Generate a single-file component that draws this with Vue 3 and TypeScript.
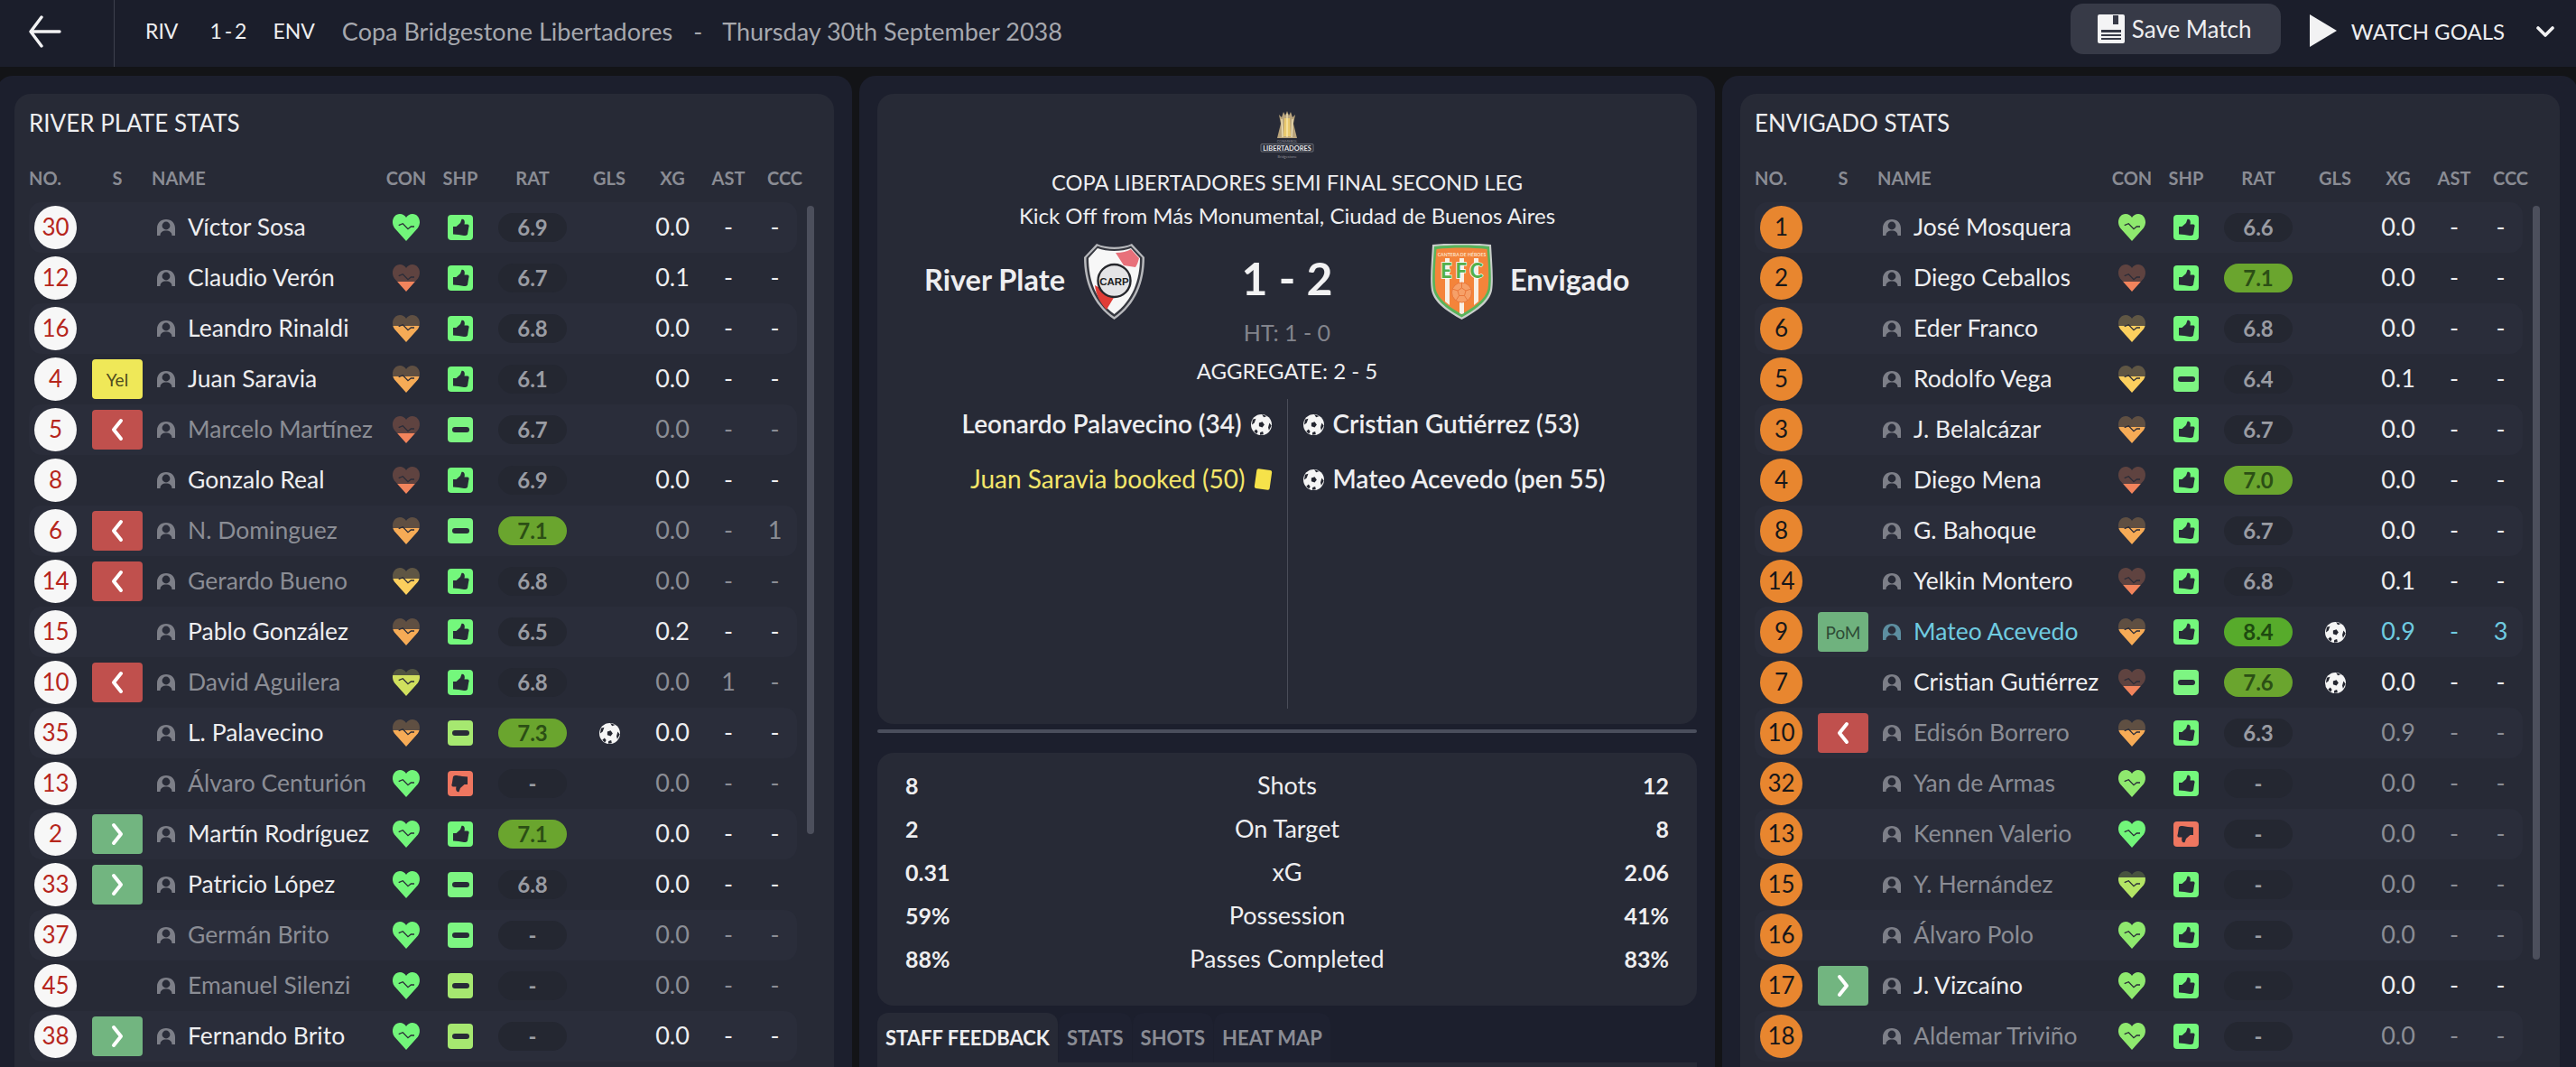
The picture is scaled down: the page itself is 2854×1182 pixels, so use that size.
<script setup lang="ts">
type Con = 'green' | 'lgreen' | 'lime' | 'yellow' | 'orange' | 'red' | 'olive'
type Shp = 'up' | 'down' | 'mid' | 'lmid'
type Sub = '' | 'on' | 'off' | 'yel' | 'pom'
interface Player {
  no: number; s: Sub; name: string; con: Con; shp: Shp; rat: string; gls?: boolean
  xg: string; ast?: string; ccc?: string; dim?: boolean; star?: boolean
}

const heartFill: Record<Con, { top: string; bottom: string; split: number }> = {
  green: { top: '#72f57a', bottom: '#72f57a', split: 0 },
  lgreen: { top: '#8fe96e', bottom: '#8fe96e', split: 0 },
  lime: { top: '#47533f', bottom: '#b4e565', split: 22 },
  olive: { top: '#4f5340', bottom: '#d0e05e', split: 22 },
  yellow: { top: '#5f5644', bottom: '#fbcf5e', split: 39 },
  orange: { top: '#5f4f42', bottom: '#f6ab56', split: 40 },
  red: { top: '#5f4340', bottom: '#f2845c', split: 62 },
}

function heartStyle(c: Con) {
  const h = heartFill[c]
  return { background: `linear-gradient(${h.top} ${h.split}%, ${h.bottom} ${h.split}%)` }
}

function ratClass(r: string) {
  const v = parseFloat(r)
  if (v >= 8) return 'great'
  if (v >= 7) return 'good'
  return ''
}

const ballPath = 'M12 8.4 L15.3 10.8 L14 14.7 H10 L8.7 10.8 Z M9 0.5 L15 0.5 L12 3 Z M0.6 9.5 L3.8 7.2 L3.6 12.5 L1.6 15.5 Z M23.4 9.5 L20.2 7.2 L20.4 12.5 L22.4 15.5 Z M6.2 21.8 L8 18.8 L10.6 20.8 L10 23.7 Z M17.8 21.8 L16 18.8 L13.4 20.8 L14 23.7 Z'

const river: Player[] = [
  { no: 30, s: '', name: 'Víctor Sosa', con: 'green', shp: 'up', rat: '6.9', xg: '0.0' },
  { no: 12, s: '', name: 'Claudio Verón', con: 'red', shp: 'up', rat: '6.7', xg: '0.1' },
  { no: 16, s: '', name: 'Leandro Rinaldi', con: 'orange', shp: 'up', rat: '6.8', xg: '0.0' },
  { no: 4, s: 'yel', name: 'Juan Saravia', con: 'orange', shp: 'up', rat: '6.1', xg: '0.0' },
  { no: 5, s: 'off', name: 'Marcelo Martínez', con: 'red', shp: 'mid', rat: '6.7', xg: '0.0', dim: true },
  { no: 8, s: '', name: 'Gonzalo Real', con: 'red', shp: 'up', rat: '6.9', xg: '0.0' },
  { no: 6, s: 'off', name: 'N. Dominguez', con: 'orange', shp: 'mid', rat: '7.1', xg: '0.0', ccc: '1', dim: true },
  { no: 14, s: 'off', name: 'Gerardo Bueno', con: 'yellow', shp: 'up', rat: '6.8', xg: '0.0', dim: true },
  { no: 15, s: '', name: 'Pablo González', con: 'orange', shp: 'up', rat: '6.5', xg: '0.2' },
  { no: 10, s: 'off', name: 'David Aguilera', con: 'olive', shp: 'up', rat: '6.8', xg: '0.0', ast: '1', dim: true },
  { no: 35, s: '', name: 'L. Palavecino', con: 'orange', shp: 'lmid', rat: '7.3', gls: true, xg: '0.0' },
  { no: 13, s: '', name: 'Álvaro Centurión', con: 'green', shp: 'down', rat: '-', xg: '0.0', dim: true },
  { no: 2, s: 'on', name: 'Martín Rodríguez', con: 'green', shp: 'up', rat: '7.1', xg: '0.0' },
  { no: 33, s: 'on', name: 'Patricio López', con: 'green', shp: 'mid', rat: '6.8', xg: '0.0' },
  { no: 37, s: '', name: 'Germán Brito', con: 'green', shp: 'mid', rat: '-', xg: '0.0', dim: true },
  { no: 45, s: '', name: 'Emanuel Silenzi', con: 'green', shp: 'lmid', rat: '-', xg: '0.0', dim: true },
  { no: 38, s: 'on', name: 'Fernando Brito', con: 'green', shp: 'lmid', rat: '-', xg: '0.0' },
]

const envigado: Player[] = [
  { no: 1, s: '', name: 'José Mosquera', con: 'lgreen', shp: 'up', rat: '6.6', xg: '0.0' },
  { no: 2, s: '', name: 'Diego Ceballos', con: 'red', shp: 'up', rat: '7.1', xg: '0.0' },
  { no: 6, s: '', name: 'Eder Franco', con: 'yellow', shp: 'up', rat: '6.8', xg: '0.0' },
  { no: 5, s: '', name: 'Rodolfo Vega', con: 'yellow', shp: 'mid', rat: '6.4', xg: '0.1' },
  { no: 3, s: '', name: 'J. Belalcázar', con: 'orange', shp: 'up', rat: '6.7', xg: '0.0' },
  { no: 4, s: '', name: 'Diego Mena', con: 'red', shp: 'up', rat: '7.0', xg: '0.0' },
  { no: 8, s: '', name: 'G. Bahoque', con: 'orange', shp: 'up', rat: '6.7', xg: '0.0' },
  { no: 14, s: '', name: 'Yelkin Montero', con: 'red', shp: 'up', rat: '6.8', xg: '0.1' },
  { no: 9, s: 'pom', name: 'Mateo Acevedo', con: 'orange', shp: 'up', rat: '8.4', gls: true, xg: '0.9', ccc: '3', star: true },
  { no: 7, s: '', name: 'Cristian Gutiérrez', con: 'red', shp: 'mid', rat: '7.6', gls: true, xg: '0.0' },
  { no: 10, s: 'off', name: 'Edisón Borrero', con: 'orange', shp: 'up', rat: '6.3', xg: '0.9', dim: true },
  { no: 32, s: '', name: 'Yan de Armas', con: 'lgreen', shp: 'up', rat: '-', xg: '0.0', dim: true },
  { no: 13, s: '', name: 'Kennen Valerio', con: 'green', shp: 'down', rat: '-', xg: '0.0', dim: true },
  { no: 15, s: '', name: 'Y. Hernández', con: 'lime', shp: 'up', rat: '-', xg: '0.0', dim: true },
  { no: 16, s: '', name: 'Álvaro Polo', con: 'lgreen', shp: 'up', rat: '-', xg: '0.0', dim: true },
  { no: 17, s: 'on', name: 'J. Vizcaíno', con: 'lgreen', shp: 'up', rat: '-', xg: '0.0' },
  { no: 18, s: '', name: 'Aldemar Triviño', con: 'lgreen', shp: 'up', rat: '-', xg: '0.0', dim: true },
]

const teams = [
  { key: 'riv', title: 'RIVER PLATE STATS', players: river, thumb: 696, numClass: 'num-white' },
  { key: 'env', title: 'ENVIGADO STATS', players: envigado, thumb: 835, numClass: 'num-orange' },
]

const headers = [
  { t: 'NO.', c: 'h-no' }, { t: 'S', c: '' }, { t: 'NAME', c: 'h-name' }, { t: 'CON', c: '' }, { t: 'SHP', c: '' },
  { t: 'RAT', c: '' }, { t: 'GLS', c: '' }, { t: 'XG', c: '' }, { t: 'AST', c: '' }, { t: 'CCC', c: 'h-ccc' },
]

const matchStats = [
  ['8', 'Shots', '12'], ['2', 'On Target', '8'], ['0.31', 'xG', '2.06'],
  ['59%', 'Possession', '41%'], ['88%', 'Passes Completed', '83%'],
]
const tabs = ['STAFF FEEDBACK', 'STATS', 'SHOTS', 'HEAT MAP']
</script>

<template>
  <div class="page">
    <header class="topbar">
      <div class="back">
        <svg width="36" height="36" viewBox="0 0 36 36" fill="none" stroke="#f2f2f3" stroke-width="3.4" stroke-linecap="round" stroke-linejoin="round">
          <path d="M14 2 L2 18 L14 34 M3 18 H34" />
        </svg>
      </div>
      <span class="abbr first">RIV</span>
      <span class="abbr score-mini">1 - 2</span>
      <span class="abbr env">ENV</span>
      <span class="comp">Copa Bridgestone Libertadores</span>
      <span class="comp dash">-</span>
      <span class="comp">Thursday 30th September 2038</span>
      <div class="actions">
        <button class="save">
          <svg width="30" height="32" viewBox="0 0 30 32">
            <path fill="#f4f4f5" fill-rule="evenodd" d="M2 0 H28 Q30 0 30 2 V30 Q30 32 28 32 H2 Q0 32 0 30 V2 Q0 0 2 0 Z M17 1 V11 H23 V1 Z M4 17 V20 H26 V17 Z M4 22 V24 H26 V22 Z M4 26 V28 H26 V26 Z" />
          </svg>
          <span>Save Match</span>
        </button>
        <svg class="play" width="30" height="36" viewBox="0 0 30 36"><path d="M0 0 L30 18 L0 36 Z" fill="#f2f2f3" /></svg>
        <span class="watch">WATCH GOALS</span>
        <svg class="chev" width="20" height="12" viewBox="0 0 20 12" fill="none" stroke="#f2f2f3" stroke-width="3.6" stroke-linecap="round" stroke-linejoin="round"><path d="M2 2 L10 10 L18 2" /></svg>
      </div>
    </header>

    <main class="columns">
      <template v-for="(team, ti) in teams" :key="team.key">
        <section class="panel" :style="{ order: ti === 0 ? 0 : 2 }">
          <div class="card team-card">
            <h2 class="team-title">{{ team.title }}</h2>
            <div class="grid head">
              <span v-for="h in headers" :key="h.t" :class="h.c">{{ h.t }}</span>
            </div>
            <div class="list-wrap">
              <div class="list">
                <div v-for="(p, i) in team.players" :key="p.name" class="grid row" :class="{ stripe: i % 2 === 0, dim: p.dim, star: p.star }">
                  <span class="num" :class="team.numClass">{{ p.no }}</span>
                  <span v-if="p.s === 'yel'" class="badge yel">Yel</span>
                  <span v-else-if="p.s === 'pom'" class="badge pom">PoM</span>
                  <span v-else-if="p.s" class="badge" :class="p.s">
                    <svg width="16" height="26" viewBox="0 0 16 26" fill="none" stroke="#fff" stroke-width="4" stroke-linecap="round" stroke-linejoin="round">
                      <path v-if="p.s === 'on'" d="M4 3 L12 13 L4 23" />
                      <path v-else d="M12 3 L4 13 L12 23" />
                    </svg>
                  </span>
                  <span v-else></span>
                  <span class="who">
                    <svg class="person" width="20" height="18" viewBox="0 0 20 18">
                      <path fill="currentColor" fill-rule="evenodd" d="M0 18 V10 C0 4 4 0 10 0 C16 0 20 4 20 10 V18 H16.5 C16.5 14.5 14 12.6 10 12.6 C6 12.6 3.5 14.5 3.5 18 Z M10 2.6 A4.4 4.4 0 1 0 10.01 11.4 A4.4 4.4 0 1 0 10 2.6 Z" />
                    </svg>
                  </span>
                  <span class="name">{{ p.name }}</span>
                  <span class="heart" :style="heartStyle(p.con)">
                    <svg width="30" height="30" viewBox="0 0 30 30" fill="none" stroke="#2a2c38" stroke-width="1.3"><path d="M6.7 12.7 L11.3 10.7 L17 16.7 L20.3 14 L24 14" /></svg>
                  </span>
                  <span class="shp" :class="p.shp">
                    <svg v-if="p.shp === 'up'" width="28" height="28" viewBox="0 0 28 28"><path fill="#282b37" d="M6 13 H9.5 L14 9 L15.5 4.8 C18 4.2 19.5 6.5 18.5 10.5 H22 C23.6 10.5 24 12.6 23.2 14 L22 21.5 C21.4 23 20 23 18 23 L12 22 L6 21.5 Z" /></svg>
                    <svg v-else-if="p.shp === 'down'" width="28" height="28" viewBox="0 0 28 28"><path fill="#282b37" transform="rotate(180 14 14)" d="M6 13 H9.5 L14 9 L15.5 4.8 C18 4.2 19.5 6.5 18.5 10.5 H22 C23.6 10.5 24 12.6 23.2 14 L22 21.5 C21.4 23 20 23 18 23 L12 22 L6 21.5 Z" /></svg>
                    <i v-else class="bar"></i>
                  </span>
                  <span class="rat" :class="ratClass(p.rat)">{{ p.rat }}</span>
                  <span class="gls">
                    <svg v-if="p.gls" class="ball" width="23" height="23" viewBox="0 0 24 24"><circle cx="12" cy="12" r="12" fill="#f5f5f5" /><path fill="#23252f" transform="rotate(18 12 12)" :d="ballPath" /></svg>
                  </span>
                  <span class="val">{{ p.xg }}</span>
                  <span class="val">{{ p.ast ?? '-' }}</span>
                  <span class="val">{{ p.ccc ?? '-' }}</span>
                </div>
              </div>
              <div class="thumb" :style="{ height: team.thumb + 'px' }"></div>
            </div>
          </div>
        </section>
      </template>

      <section class="panel center" style="order: 1">
        <div class="card match-card">
          <svg class="trophy" width="60" height="54" viewBox="0 0 60 54">
            <path fill="#b9a47c" d="M24 30 L19 30 L23 14 L21 4 L24 7 L26 1 L28 5 L30 0 L32 5 L34 1 L36 7 L39 4 L37 14 L41 30 L36 30 Z" />
            <path fill="#e9c96d" d="M27 8 H33 L34 28 H26 Z" />
            <path stroke="#fff3c9" stroke-width="1" fill="none" d="M24 9 L25 29 M36 9 L35 29 M30 3 V29" />
            <text x="30" y="35" text-anchor="middle" class="t-small">CONMEBOL</text>
            <rect x="1" y="36.5" width="58" height="8.5" rx="1" fill="none" stroke="#9b9da4" stroke-width=".6" />
            <text x="30" y="43.5" text-anchor="middle" class="t-lib">LIBERTADORES</text>
            <text x="30" y="52" text-anchor="middle" class="t-small">Bridgestone</text>
          </svg>
          <div class="m-title">COPA LIBERTADORES SEMI FINAL SECOND LEG</div>
          <div class="m-kick">Kick Off from Más Monumental, Ciudad de Buenos Aires</div>
          <div class="scoreline">
            <div class="side home">
              <span class="tname">River Plate</span>
              <svg width="67" height="84" viewBox="0 0 67 84">
                <path fill="#b7b8bc" d="M14 0 C24 5 43 5 53 0 L67 15 C67 42 58 67 33.5 84 C9 67 0 42 0 15 Z" />
                <path fill="#35373f" d="M15 2.5 C25 7 42 7 52 2.5 L64.5 15.5 C64.5 41 56 65 33.5 81 C11 65 2.5 41 2.5 15.5 Z" />
                <path fill="#f7f7f7" d="M15 5 C25 9 42 9 52 5 L62 16 C62 40 54 63 33.5 78 C13 63 5 40 5 16 Z" />
                <path fill="#e8707a" d="M35 10 C42 10 48 8.5 52 6 L61 16 C60 20 59 23 57 26 L44 24 Z" />
                <path fill="#e03c36" d="M12 46 L34 58 L25 73 C18 66 13 56 12 46 Z" />
                <circle cx="33.5" cy="41" r="18" fill="#e4e4e6" stroke="#26272c" stroke-width="2.4" />
                <text x="33.5" y="45.5" text-anchor="middle" class="t-carp">CARP</text>
              </svg>
            </div>
            <div class="bigscore">1 - 2</div>
            <div class="side away">
              <svg width="71" height="84" viewBox="0 0 71 84">
                <path fill="#c9cdca" d="M3 1 C22 -1 49 -1 68 1 C69 20 71 40 69 52 C66 66 50 76 35.5 84 C21 76 5 66 2 52 C0 40 2 20 3 1 Z" />
                <path fill="#58b35a" d="M5 3 C23 1 48 1 66 3 C67 20 69 40 67 51 C64 64 49 74 35.5 81.5 C22 74 7 64 4 51 C2 40 4 20 5 3 Z" />
                <path fill="#f4843a" d="M7.5 6 C24 4 47 4 63.5 6 C65 20 66 40 64.5 50 C62 62 48 71 35.5 78 C23 71 9 62 6.5 50 C5 40 6 20 7.5 6 Z" />
                <path fill="#f8efe4" d="M17 16 H22 V68 L17 64 Z M33 16 H38 V77 L35.5 78 L33 77 Z M49 16 H54 V64 L49 68 Z" />
                <text x="35.5" y="13.5" text-anchor="middle" class="t-cant">CANTERA DE HÉROES</text>
                <text x="35.5" y="38" text-anchor="middle" textLength="47" lengthAdjust="spacing" class="t-efc">EFC</text>
                <circle cx="35.5" cy="54" r="11" fill="#f6a068" stroke="#e9773a" stroke-width="1" />
                <path fill="none" stroke="#e9773a" stroke-width="1" d="M35.5 49 L40 52 L38.5 57.5 H32.5 L31 52 Z M35.5 43 V49 M40 52 L46 50 M38.5 57.5 L42 63 M32.5 57.5 L29 63 M31 52 L25 50" />
              </svg>
              <span class="tname">Envigado</span>
            </div>
          </div>
          <div class="ht">HT: 1 - 0</div>
          <div class="agg">AGGREGATE: 2 - 5</div>
          <div class="events">
            <div class="ev-col left">
              <div class="ev bold"><span>Leonardo Palavecino (34)</span><svg width="23" height="23" viewBox="0 0 24 24"><circle cx="12" cy="12" r="12" fill="#f5f5f5" /><path fill="#23252f" transform="rotate(18 12 12)" :d="ballPath" /></svg></div>
              <div class="ev booked"><span>Juan Saravia booked (50)</span><i class="ycard"></i></div>
            </div>
            <div class="ev-line"></div>
            <div class="ev-col right">
              <div class="ev bold"><svg width="23" height="23" viewBox="0 0 24 24"><circle cx="12" cy="12" r="12" fill="#f5f5f5" /><path fill="#23252f" transform="rotate(18 12 12)" :d="ballPath" /></svg><span>Cristian Gutiérrez (53)</span></div>
              <div class="ev bold"><svg width="23" height="23" viewBox="0 0 24 24"><circle cx="12" cy="12" r="12" fill="#f5f5f5" /><path fill="#23252f" transform="rotate(18 12 12)" :d="ballPath" /></svg><span>Mateo Acevedo (pen 55)</span></div>
            </div>
          </div>
        </div>
        <div class="rule"></div>
        <div class="card stats-card">
          <div v-for="s in matchStats" :key="s[1]" class="stat">
            <b>{{ s[0] }}</b><span>{{ s[1] }}</span><b>{{ s[2] }}</b>
          </div>
        </div>
        <nav class="tabs">
          <span v-for="(t, i) in tabs" :key="t" class="tab" :class="{ active: i === 0 }">{{ t }}</span>
        </nav>
        <div class="card tab-body"></div>
      </section>
    </main>
  </div>
</template>

<style>
html, body { margin: 0; background: #131417; overflow: hidden; }
</style>

<style scoped>
.page {
  width: 2854px; height: 1182px; overflow: hidden; background: #131417; color: #eeeef0;
  font-family: Lato, "Open Sans", sans-serif; font-size: 25px;
}
.topbar { height: 74px; box-sizing: border-box; padding-bottom: 6px; background: #1b1e2b; display: flex; align-items: center; }
.back { width: 127px; height: 74px; align-self: flex-start; margin-bottom: -6px; border-right: 1px solid #3e414e; box-sizing: border-box; padding: 17px 0 0 32px; }
.abbr { font-size: 23px; color: #eeeef0; }
.first { margin-left: 34px; }
.score-mini { margin-left: 35px; word-spacing: -3px; }
.env { margin-left: 29px; }
.comp { font-size: 27px; color: #a6a8ae; margin-left: 30px; }
.comp.dash { margin-left: 23px; }
.comp.dash + .comp { margin-left: 22px; }
.actions { margin-left: auto; display: flex; align-items: center; padding-right: 24px; }
.save {
  width: 233px; height: 56px; margin: 0 32px 4px 0; border: 0; border-radius: 14px; background: #373a47; color: #eeeef0;
  display: flex; align-items: center; gap: 8px; padding: 0 0 0 30px; font: inherit; font-size: 26px;
}
.save svg { flex: none; }
.watch { font-size: 24px; margin: 0 35px 0 16px; }
.chev { margin-top: 2px; }
.columns { margin: 10px -4px 0; display: grid; grid-template-columns: repeat(3, 948px); gap: 8px; height: 1120px; }
.panel { background: #1c1f2d; border-radius: 18px 18px 0 0; padding: 20px 20px 0; box-sizing: border-box; height: 1120px; overflow: hidden; }
.card { background: #272a36; border-radius: 18px; }
.team-card { height: 1100px; padding: 0 0 0 16px; box-sizing: border-box; }
.team-title { margin: 0; font-size: 26px; font-weight: 400; line-height: 64px; padding-bottom: 2px; color: #eeeef0; }
.grid {
  display: grid; align-items: center; justify-items: center; width: 851px;
  grid-template-columns: 70px 56px 50px 212px 60px 60px 100px 70px 70px 54px 49px;
}
.head { height: 54px; font-size: 20px; font-weight: 700; color: #8a8c94; grid-template-columns: 70px 56px 262px 60px 60px 100px 70px 70px 54px 49px; }
.h-no { justify-self: start; }
.h-name { justify-self: start; padding-left: 10px; }
.h-ccc { padding-left: 22px; }
.list-wrap { display: flex; gap: 11px; align-items: flex-start; }
.list { flex: none; }
.thumb { width: 8px; margin-top: 4px; border-radius: 4px; background: #4c4f5c; }
.row { height: 56px; border-radius: 14px; }
.row.stripe { background: #2a2d3a; }
.num {
  justify-self: start; margin-left: 6px; width: 47px; height: 48px; border-radius: 50%; box-sizing: border-box; padding-bottom: 2px;
  display: flex; align-items: center; justify-content: center; font-size: 26px;
}
.num-white { background: #f7f7f7; color: #b6261c; }
.num-orange { background: #e8862f; color: #17171a; }
.badge { width: 56px; height: 44px; border-radius: 4px; display: flex; align-items: center; justify-content: center; font-size: 19px; }
.badge.on { background: #72b580; }
.badge.off { background: #c0504d; }
.badge.yel { background: #efe858; color: #4d4b20; }
.badge.pom { background: #6fb27e; color: #2e4b36; }
.who { justify-self: end; margin-right: 14px; color: #7d7f88; display: flex; }
.name { justify-self: start; white-space: nowrap; font-size: 26.5px; padding-bottom: 3px; }
.dim .name, .dim .val { color: #8b8d95; }
.star .name, .star .val { color: #6fcbe0; }
.star .who { color: #5d8ea0; }
.heart {
  width: 30px; height: 30px; display: block;
  clip-path: path("M15 30 L2 15.5 C-2.5 9 1 0 8 0 C11 0 14 2 15 4 C16 2 19 0 22 0 C29 0 32.5 9 28 15.5 Z");
}
.heart svg { display: block; }
.shp { width: 28px; height: 28px; border-radius: 4px; display: flex; align-items: center; justify-content: center; }
.shp.up { background: #74f87c; }
.shp.down { background: #ee7660; }
.shp.mid { background: #7df582; }
.shp.lmid { background: #a6e870; }
.bar { width: 19px; height: 6px; border-radius: 3px; background: #282b37; }
.rat {
  width: 76px; height: 32px; border-radius: 16px; background: #242731; color: #9a9ca3; font-weight: 700; box-sizing: border-box; padding-bottom: 2px;
  display: flex; align-items: center; justify-content: center; font-size: 24px;
}
.rat.good { background: #6aa52e; color: #2c4f15; }
.rat.great { background: #57ab2b; color: #1e4a10; }
.gls { display: flex; }
.val { color: #eeeef0; font-size: 27px; padding-bottom: 3px; }

.center { display: flex; flex-direction: column; }
.match-card { height: 698px; padding-top: 19px; box-sizing: border-box; display: flex; flex-direction: column; align-items: center; flex: none; }
.trophy { flex: none; display: block; }
.t-small { font-size: 4px; fill: #8a8c92; font-family: Lato, sans-serif; }
.t-lib { font-size: 7.4px; font-weight: 700; fill: #e4e4e6; font-family: Lato, sans-serif; }
.t-carp { font-size: 11.5px; font-weight: 700; fill: #1d1e22; font-family: "Liberation Sans", sans-serif; }
.t-cant { font-size: 5.2px; font-weight: 700; fill: #fbe3cc; font-family: Lato, sans-serif; }
.t-efc { font-size: 22px; font-weight: 900; fill: #54b04c; stroke: #fff; stroke-width: 1.4px; paint-order: stroke; font-family: Lato, sans-serif; }
.m-title { margin-top: 10px; font-size: 23.7px; line-height: 30px; color: #eeeef0; }
.m-kick { margin-top: 7px; font-size: 24px; line-height: 30px; color: #eeeef0; }
.scoreline { margin-top: 16px; height: 84px; width: 100%; display: grid; grid-template-columns: 1fr 316px 1fr; align-items: center; }
.side { display: flex; align-items: center; }
.home { justify-content: flex-end; gap: 21px; }
.away { gap: 18px; }
.tname { font-size: 32.5px; font-weight: 700; padding-bottom: 6px; }
.bigscore { text-align: center; font-size: 50px; font-weight: 700; color: #f2f2f3; padding-bottom: 8px; }
.ht { font-size: 25px; line-height: 28px; padding-bottom: 2px; color: #82848c; }
.agg { margin-top: 13px; font-size: 24px; line-height: 28px; padding-bottom: 2px; }
.events { margin-top: 15px; flex: 1; width: 100%; display: grid; grid-template-columns: 1fr 1px 1fr; margin-bottom: 17px; }
.ev-line { background: #4a4d59; }
.ev-col { display: flex; flex-direction: column; gap: 5px; }
.ev-col.left { align-items: flex-end; padding-right: 17px; }
.ev-col.right { align-items: flex-start; padding-left: 17px; }
.ev { height: 56px; display: flex; align-items: center; gap: 10px; font-size: 28px; white-space: nowrap; }
.ev span { padding-bottom: 3px; }
.ev.bold { font-weight: 600; }
.ev.booked { color: #f4e66a; }
.ycard { display: block; width: 17px; height: 22px; border-radius: 2px; background: #f6e24a; transform: rotate(8deg); margin-left: 1px; margin-right: 1px; }
.rule { flex: none; height: 4px; margin-top: 6px; background: #4a4e5c; border-radius: 2px; }
.stats-card { flex: none; height: 280px; margin-top: 22px; padding: 13px 31px 0; box-sizing: border-box; }
.stat { height: 48px; box-sizing: border-box; padding-bottom: 3px; display: grid; grid-template-columns: 1fr auto 1fr; align-items: center; font-size: 27px; }
.stat b { font-weight: 700; font-size: 25px; }
.stat b:last-child { text-align: right; }
.tabs { flex: none; margin-top: 8px; height: 55px; display: flex; gap: 1px; }
.tab {
  background: #1e2130; color: #8a8c94; border-radius: 12px 12px 0 0; padding: 0 9px; display: flex; align-items: center;
  font-size: 22px; font-weight: 700;
}
.tab.active { background: #272a36; color: #eeeef0; }
.tab-body { border-radius: 0; flex: 1; }
</style>
